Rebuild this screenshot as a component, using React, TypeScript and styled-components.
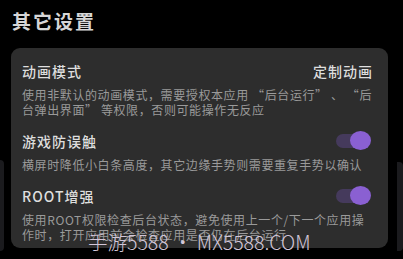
import React from 'react';
import styled, { createGlobalStyle } from 'styled-components';

const GlobalStyle = createGlobalStyle`
  html, body {
    margin: 0;
    padding: 0;
    background: #000;
    width: 403px;
    height: 259px;
    overflow: hidden;
  }
  body {
    font-family: "Noto Sans CJK SC", "Noto Sans", sans-serif;
  }
`;

type SettingItem = {
  title: string;
  lines: string[];
  value?: string;
  toggle?: boolean;
};

const items: SettingItem[] = [
  {
    title: '动画模式',
    value: '定制动画',
    lines: ['使用非默认的动画模式，需要授权本应用 “后台运行” 、 “后', '台弹出界面” 等权限，否则可能操作无反应'],
  },
  {
    title: '游戏防误触',
    toggle: true,
    lines: ['横屏时降低小白条高度，其它边缘手势则需要重复手势以确认'],
  },
  {
    title: 'ROOT增强',
    toggle: true,
    lines: ['使用ROOT权限检查后台状态，避免使用上一个/下一个应用操', '作时，打开应用前会检查应用是否仍在后台运行'],
  },
];

export default function App() {
  return (
    <>
      <GlobalStyle />
      <Screen>
        <Peek $top={160} $width={4} />
        <Main>
          <Heading>其它设置</Heading>
          <Card>
            {items.map((item) => (
              <Item key={item.title}>
                <TitleRow>
                  <ItemTitle>{item.title}</ItemTitle>
                  {item.value && <Value>{item.value}</Value>}
                  {item.toggle && (
                    <Switch>
                      <Thumb />
                    </Switch>
                  )}
                </TitleRow>
                <Desc>
                  {item.lines.map((l) => (
                    <DescLine key={l}>{l}</DescLine>
                  ))}
                </Desc>
              </Item>
            ))}
          </Card>
        </Main>
        <Peek $top={162} $width={6} />
        <Watermark>手游5588 • MX5588.COM</Watermark>
      </Screen>
    </>
  );
}

const Screen = styled.div`
  position: relative;
  display: flex;
  width: 403px;
  height: 259px;
  background: #000;
  overflow: hidden;
`;

const Peek = styled.div<{ $top: number; $width: number }>`
  flex: none;
  width: ${(p) => p.$width}px;
  margin-top: ${(p) => p.$top}px;
  margin-bottom: 8px;
  background: #1b1b1e;
  border-radius: 0 4px 4px 0;
`;

const Main = styled.div`
  flex: 1;
  display: flex;
  flex-direction: column;
  padding: 8px 9px 0 7px;
`;

const Heading = styled.div`
  height: 26px;
  line-height: 26px;
  padding-left: 1px;
  font-size: 19px;
  font-weight: 700;
  letter-spacing: 2px;
  color: #d6d6d6;
`;

const Card = styled.div`
  margin-top: 14px;
  height: 200px;
  box-sizing: border-box;
  padding: 13px 15px 0 11px;
  background: #2d2d2d;
  border-radius: 9px;
  display: flex;
  flex-direction: column;
  gap: 14px;
`;

const Item = styled.div`
  display: flex;
  flex-direction: column;
`;

const TitleRow = styled.div`
  height: 20px;
  display: flex;
  align-items: center;
  justify-content: space-between;
`;

const ItemTitle = styled.span`
  font-size: 14px;
  font-weight: 500;
  letter-spacing: 1px;
  color: #dedede;
`;

const Value = styled.span`
  font-size: 14px;
  font-weight: 500;
  letter-spacing: 1px;
  color: #dedede;
`;

const Switch = styled.div`
  position: relative;
  width: 34px;
  height: 14px;
  margin-right: 3px;
  border-radius: 7px;
  background: #453a5c;
`;

const Thumb = styled.div`
  position: absolute;
  right: -1px;
  top: -3px;
  width: 21px;
  height: 19px;
  border-radius: 50%;
  background: #8a60d2;
`;

const Desc = styled.div`
  margin-top: 6px;
  display: flex;
  flex-direction: column;
`;

const DescLine = styled.span`
  height: 15px;
  line-height: 15px;
  font-size: 12px;
  letter-spacing: 0.6px;
  color: #9a9a9a;
  white-space: nowrap;
`;

const Watermark = styled.div`
  position: absolute;
  left: 88px;
  top: 229px;
  font-size: 19.5px;
  font-weight: 300;
  line-height: 26px;
  color: #d2c6d8;
  white-space: nowrap;
`;
